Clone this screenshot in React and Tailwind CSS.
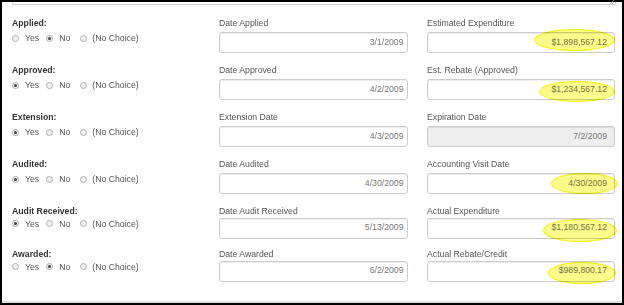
import React from "react";

const rows = [
  { label: "Applied:", sel: 1, dLabel: "Date Applied", dVal: "3/1/2009", rLabel: "Estimated Expenditure", rVal: "$1,898,567.12", hl: { l: 106, t: -4, w: 81, h: 22 }, tight: false, h: "h-[47px]" },
  { label: "Approved:", sel: 0, dLabel: "Date Approved", dVal: "4/2/2009", rLabel: "Est. Rebate (Approved)", rVal: "$1,234,567.12", hl: { l: 111, t: 1, w: 76, h: 21 }, tight: false, h: "h-[47px]" },
  { label: "Extension:", sel: 0, dLabel: "Extension Date", dVal: "4/3/2009", rLabel: "Expiration Date", rVal: "7/2/2009", disabled: true, tight: false, h: "h-[47px]" },
  { label: "Audited:", sel: 0, dLabel: "Date Audited", dVal: "4/30/2009", rLabel: "Accounting Visit Date", rVal: "4/30/2009", hl: { l: 123, t: -1, w: 67, h: 21 }, tight: false, h: "h-[47px]" },
  { label: "Audit Received:", sel: 0, dLabel: "Date Audit Received", dVal: "5/13/2009", rLabel: "Actual Expenditure", rVal: "$1,180,567.12", hl: { l: 115, t: 0, w: 74, h: 23 }, tight: true, h: "h-[43px]" },
  { label: "Awarded:", sel: 1, dLabel: "Date Awarded", dVal: "6/2/2009", rLabel: "Actual Rebate/Credit", rVal: "$989,800.17", hl: { l: 120, t: 0, w: 68, h: 22 }, tight: true, h: "h-[44px]" },
];

function Radio({ checked }) {
  return (
    <span className="w-[7px] h-[7px] rounded-full border border-[#b0b0b0] bg-[#f0f0f0] flex items-center justify-center shrink-0">
      {checked && <span className="w-[3px] h-[3px] rounded-full bg-[#444]" />}
    </span>
  );
}

function RadioGroup({ sel, tight }) {
  return (
    <div className={tight ? "flex items-center leading-[12px] mt-[1px] text-[#555]" : "flex items-center leading-[12px] mt-[3.5px] text-[#555]"}>
      <span className="ml-[-0.5px]"><Radio checked={sel === 0} /></span>
      <span className="ml-[6.5px]">Yes</span>
      <span className="ml-[7px]"><Radio checked={sel === 1} /></span>
      <span className="ml-[6px]">No</span>
      <span className="ml-[9.5px]"><Radio checked={sel === 2} /></span>
      <span className="ml-[5.5px]">(No Choice)</span>
    </div>
  );
}

function Field({ label, value, tight, pr, disabled, hl }) {
  return (
    <div className="flex flex-col">
      <div className="leading-[12px] text-[#555]">{label}</div>
      <div
        className={
          (tight ? "mt-[1px] " : "mt-[3.5px] ") +
          (disabled ? "bg-[#eeeeee] " : "bg-white ") +
          (pr ? "pr-[7px] " : "pr-[3.5px] ") +
          "relative h-[21px] border border-[#cccccc] rounded-[3px] shadow-[inset_0_1px_1px_rgba(0,0,0,0.075)] flex items-center justify-end text-[#777]"
        }
      >
        <span>{value}</span>
        {hl && (
          <span
            className="absolute rounded-[50%] bg-[#fbfb8c] border-[1.5px] border-[#f2f200] mix-blend-multiply"
            style={{ left: hl.l, top: hl.t, width: hl.w, height: hl.h }}
          />
        )}
      </div>
    </div>
  );
}

export default function App() {
  return (
    <div
      className="w-[624px] h-[305px] border-2 border-black bg-white flex flex-col text-[8.7px]"
      style={{ fontFamily: '"Liberation Sans", Arial, sans-serif' }}
    >
      <div className="relative ml-[10px] w-[604px] h-[3px] border border-t-0 border-[#cccccc] rounded-b-[2px]">
        <svg className="absolute right-[1px] bottom-[0px]" width="6" height="4" viewBox="0 0 6 4">
          <path d="M2 4 L6 0 M4 4 L6 2" stroke="#999" strokeWidth="0.8" fill="none" />
        </svg>
      </div>
      <div className="flex-1 flex flex-col pt-[11.5px] pl-[10px]">
        {rows.map((r) => (
          <div key={r.label} className={"flex shrink-0 " + r.h}>
            <div className="w-[207px] flex flex-col">
              <div className="font-bold text-[#333] leading-[12px]">{r.label}</div>
              <RadioGroup sel={r.sel} tight={r.tight} />
            </div>
            <div className="w-[189px]">
              <Field label={r.dLabel} value={r.dVal} tight={r.tight} />
            </div>
            <div className="w-[188px] ml-[19px]">
              <Field label={r.rLabel} value={r.rVal} tight={r.tight} pr disabled={r.disabled} hl={r.hl} />
            </div>
          </div>
        ))}
      </div>
      <div className="h-[2px] bg-[#e2e2e2] shrink-0" />
    </div>
  );
}
